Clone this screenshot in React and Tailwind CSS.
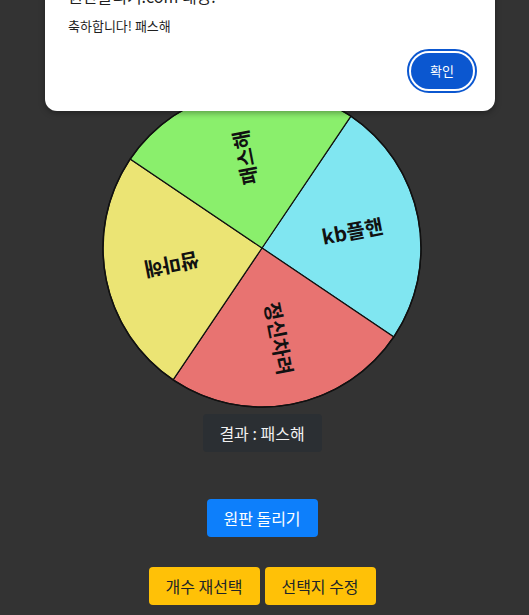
import React from 'react';

const slices = [
    { label: 'kb플핸', color: '#80e6f1' },
    { label: '정신차려', color: '#e87371' },
    { label: '쌈마해', color: '#ebe474' },
    { label: '패스해', color: '#8aef6c' },
];

const C = 161;
const R = 159;
const START = -56;

const point = (deg, r) => {
    const a = (deg * Math.PI) / 180;
    return [C + r * Math.cos(a), C + r * Math.sin(a)];
};

const Wheel = () => {
    const step = 360 / slices.length;
    return (
        <svg width="322" height="322" viewBox="0 0 322 322" className="block">
            {slices.map((s, i) => {
                const a0 = START + i * step;
                const a1 = a0 + step;
                const [x0, y0] = point(a0, R);
                const [x1, y1] = point(a1, R);
                return (
                    <path
                        key={s.label}
                        d={`M${C} ${C} L${x0} ${y0} A${R} ${R} 0 0 1 ${x1} ${y1} Z`}
                        fill={s.color}
                        stroke="#111"
                        strokeWidth="1.2"
                    />
                );
            })}
            {slices.map((s, i) => {
                const mid = START + i * step + step / 2;
                return (
                    <text
                        key={s.label + '-t'}
                        x={C + 92}
                        y={C}
                        transform={`rotate(${mid} ${C} ${C})`}
                        textAnchor="middle"
                        dominantBaseline="central"
                        fontSize="20"
                        fontWeight="700"
                        fill="#111"
                        className="font-['Noto_Sans_CJK_KR',sans-serif]"
                    >
                        {s.label}
                    </text>
                );
            })}
            <circle cx={C} cy={C} r={R} fill="none" stroke="#111" strokeWidth="1.5" />
        </svg>
    );
};

const App = () => {
    return (
        <div className="relative flex flex-col items-center min-h-[615px] pr-[5px] bg-[#333333] overflow-hidden font-['Noto_Sans_CJK_KR','Noto_Sans',sans-serif]">
            <div className="pt-[87px]">
                <Wheel />
            </div>

            <div className="mt-[5px] w-[119px] h-[38px] flex items-center justify-center bg-[#2b2f33] text-[#f1f1f1] text-base rounded">
                결과 : 패스해
            </div>

            <button className="mt-[47px] w-[111px] h-[38px] bg-[#0d7ffb] text-white text-base rounded">
                원판 돌리기
            </button>

            <div className="mt-[30px] flex gap-[5px]">
                <button className="w-[111px] h-[38px] bg-[#ffc107] text-[#212529] text-base rounded">
                    개수 재선택
                </button>
                <button className="w-[111px] h-[38px] bg-[#ffc107] text-[#212529] text-base rounded">
                    선택지 수정
                </button>
            </div>

            {/* browser alert */}
            <div className="absolute left-[45px] top-[-28px] w-[450px] bg-white rounded-[12px] shadow-[0_2px_6px_rgba(0,0,0,0.35)] pt-[14px] pb-[18px] px-[23px]">
                <div className="text-[16px] leading-[20px] text-[#1f1f1f]">원판돌리기.com 내용:</div>
                <div className="mt-[11px] text-[13px] leading-[18px] text-[#1f1f1f]">축하합니다! 패스해</div>
                <div className="mt-[14px] flex justify-end">
                    <div className="w-[70px] h-[44px] rounded-full border-2 border-[#0b57d0] bg-white p-[2px] -mr-[5px]">
                        <div className="w-full h-full rounded-full bg-[#0b57d0] flex items-center justify-center text-white text-[13px]">
                            확인
                        </div>
                    </div>
                </div>
            </div>
        </div>
    );
};

export default App;
